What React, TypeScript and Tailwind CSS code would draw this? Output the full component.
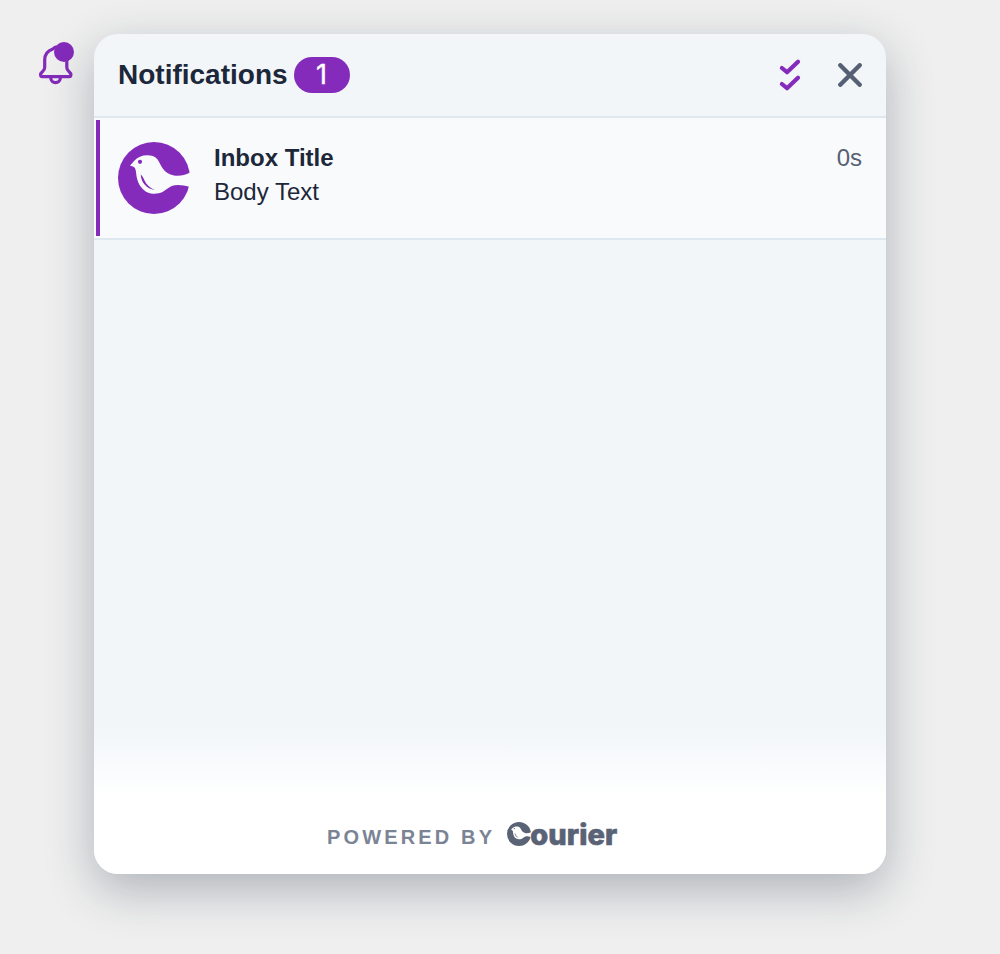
function BirdMark({ className, bird }: { className: string; bird: string }) {
  return (
    <svg viewBox="0 0 72 72" className={className} fill="currentColor" aria-hidden="true">
      <circle cx="36" cy="36" r="36" />
      <path
        fill={bird}
        d="M12 23.6C13.4 22.4 14.6 20.6 16 19C19.4 15.2 24 13.2 29.3 13.2C33.5 13.2 36.8 14.2 39.2 17C41.6 19.8 42.2 23 44.6 26.2C47.4 30.2 51 32.4 56 33.4C61 34.1 67 33.4 71.6 30.7L74 30V45.6L71 44.8C65 42.8 58.5 42.2 53.7 44C50 45.6 47.6 48.4 44.5 50C39.5 52.4 32.6 52.4 27.6 49.4C23 46.4 20.2 41.6 19 36.5C18 32.5 18.4 29 16.9 26C15.8 24.6 14 24.5 12 23.6Z"
      />
      <circle cx="22" cy="19.8" r="2.1" />
      <path d="M22.7 32.6C23.2 40.5 28.5 47.2 37 48C31.7 46 28.6 42.6 26.5 38.6C25.5 36.4 24.6 34.2 22.7 32.6Z" />
    </svg>
  );
}

function Bell() {
  return (
    <svg width="40" height="48" viewBox="0 0 40 48" fill="none" stroke="#842bbb" strokeWidth="3.2" strokeLinecap="round" strokeLinejoin="round" aria-label="Notifications">
      <path d="M18 7.2C16.2 7.4 15.6 8.6 14.8 9C10 10.6 6.7 14.5 6.7 20V27.4C6.7 31.8 2.6 31.6 2.6 34.7C2.6 36 3.2 36.6 4.4 36.6H31C32.3 36.6 32.9 36 32.9 34.7C32.9 31.6 28.8 31.8 28.8 27.4V19" />
      <path d="M12.7 37.5C12.7 44.4 22.4 44.4 22.4 37.5" />
      <circle cx="26" cy="12" r="10" fill="#842bbb" stroke="none" />
    </svg>
  );
}

export default function App() {
  return (
    <div className="flex h-[954px] w-[1000px] items-start overflow-hidden bg-[#efefef] font-['Liberation_Sans',Arial,sans-serif] text-[#1c273a]">
      <button className="mt-10 ml-[38px] h-12 w-10 shrink-0"><Bell /></button>
      <section className="mt-[34px] ml-4 flex h-[840px] w-[792px] shrink-0 flex-col overflow-hidden rounded-[24px] bg-[#f2f6f9] shadow-[0_16px_48px_rgba(28,39,58,0.3)]">
        <header className="flex h-[84px] shrink-0 items-center border-b-2 border-[#dfe8ee] px-6">
          <h1 className="text-[28px] leading-8 font-bold">Notifications</h1>
          <span className="ml-[6px] flex h-9 w-14 items-center justify-center rounded-full bg-[#842bbb] pb-px font-['Inter',sans-serif] text-[27px] leading-[35px] text-white [-webkit-text-stroke:0.4px_white]">1</span>
          <button className="ml-auto" aria-label="Mark all as read">
            <svg width="24" height="34" viewBox="0 0 24 34" fill="none" stroke="#842bbb" strokeWidth="4.2" strokeLinecap="round" strokeLinejoin="round">
              <path d="M3.9 10L9 14.2L20 3.7M3.9 26L9 30.2L20 19.7" />
            </svg>
          </button>
          <button className="ml-9" aria-label="Close">
            <svg width="24" height="24" viewBox="0 0 24 24" fill="none" stroke="#566074" strokeWidth="4.4" strokeLinecap="round">
              <path d="M2.3 2.3L21.7 21.7M21.7 2.3L2.3 21.7" />
            </svg>
          </button>
        </header>
        <article className="flex h-[122px] shrink-0 border-b-2 border-[#dfe8ee] bg-[#f9fafc] pr-6 pl-[2px]">
          <div className="my-[2px] w-1 bg-[#842bbb]" />
          <BirdMark className="mt-6 ml-[18px] size-[72px] shrink-0 text-[#842bbb]" bird="#f9fafc" />
          <div className="mt-[23px] ml-6 text-2xl leading-[34px]">
            <h2 className="font-bold">Inbox Title</h2>
            <p>Body Text</p>
          </div>
          <time className="mt-[23px] ml-auto text-2xl leading-[34px] text-[#566074]">0s</time>
        </article>
        <div className="flex-1" />
        <div className="h-[70px] shrink-0 bg-linear-to-b from-[#f2f6f9] to-white" />
        <footer className="flex h-[76px] shrink-0 items-start bg-white pl-[233px] whitespace-nowrap">
          <span className="mt-[27px] text-[20px] leading-6 font-bold tracking-[3.15px] text-[#7b8494]">POWERED BY</span>
          <div className="mt-[18px] ml-3 flex text-[#5a6275]">
            <BirdMark className="mt-[6px] size-6 shrink-0" bird="#ffffff" />
            <span className="mt-px -ml-px font-['Inter',sans-serif] text-[29px] leading-9 font-extrabold tracking-[0.1px] [-webkit-text-stroke:0.7px_#5a6275]">ourier</span>
          </div>
        </footer>
      </section>
    </div>
  );
}
